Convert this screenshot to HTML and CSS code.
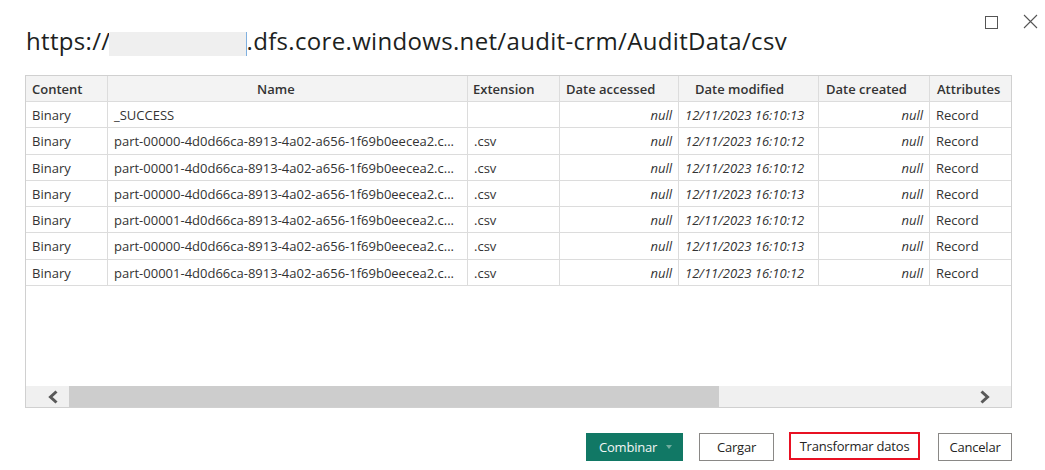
FILE: index.html
```html
<!DOCTYPE html>
<html lang="es">
<head>
<meta charset="utf-8">
<title>Navegador</title>
<link rel="stylesheet" href="styles.css">
</head>
<body>
<div class="dialog">
  <div class="header">
    <h1 class="title">https://<span class="redacted"></span>.dfs.core.windows.net/audit-crm/AuditData/csv</h1>
    <div class="controls">
      <svg class="ctl" width="14" height="14" viewBox="0 0 14 14"><rect x="1.5" y="1.5" width="12" height="12" fill="none" stroke="#555" stroke-width="1"/></svg>
      <svg class="ctl" width="15" height="15" viewBox="0 0 15 15"><path d="M1 1 L14 14 M14 1 L1 14" stroke="#555" stroke-width="1.1" fill="none"/></svg>
    </div>
  </div>

  <div class="table">
    <div class="row head">
      <div class="c c1">Content</div>
      <div class="c c2">Name</div>
      <div class="c c3">Extension</div>
      <div class="c c4">Date accessed</div>
      <div class="c c5">Date modified</div>
      <div class="c c6">Date created</div>
      <div class="c c7">Attributes</div>
    </div>
    <div class="row">
      <div class="c">Binary</div><div class="c">_SUCCESS</div><div class="c"></div>
      <div class="c num">null</div><div class="c it">12/11/2023 16:10:13</div><div class="c num">null</div><div class="c">Record</div>
    </div>
    <div class="row">
      <div class="c">Binary</div><div class="c">part-00000-4d0d66ca-8913-4a02-a656-1f69b0eecea2.c...</div><div class="c">.csv</div>
      <div class="c num">null</div><div class="c it">12/11/2023 16:10:12</div><div class="c num">null</div><div class="c">Record</div>
    </div>
    <div class="row">
      <div class="c">Binary</div><div class="c">part-00001-4d0d66ca-8913-4a02-a656-1f69b0eecea2.c...</div><div class="c">.csv</div>
      <div class="c num">null</div><div class="c it">12/11/2023 16:10:12</div><div class="c num">null</div><div class="c">Record</div>
    </div>
    <div class="row">
      <div class="c">Binary</div><div class="c">part-00000-4d0d66ca-8913-4a02-a656-1f69b0eecea2.c...</div><div class="c">.csv</div>
      <div class="c num">null</div><div class="c it">12/11/2023 16:10:13</div><div class="c num">null</div><div class="c">Record</div>
    </div>
    <div class="row">
      <div class="c">Binary</div><div class="c">part-00001-4d0d66ca-8913-4a02-a656-1f69b0eecea2.c...</div><div class="c">.csv</div>
      <div class="c num">null</div><div class="c it">12/11/2023 16:10:12</div><div class="c num">null</div><div class="c">Record</div>
    </div>
    <div class="row">
      <div class="c">Binary</div><div class="c">part-00000-4d0d66ca-8913-4a02-a656-1f69b0eecea2.c...</div><div class="c">.csv</div>
      <div class="c num">null</div><div class="c it">12/11/2023 16:10:13</div><div class="c num">null</div><div class="c">Record</div>
    </div>
    <div class="row">
      <div class="c">Binary</div><div class="c">part-00001-4d0d66ca-8913-4a02-a656-1f69b0eecea2.c...</div><div class="c">.csv</div>
      <div class="c num">null</div><div class="c it">12/11/2023 16:10:12</div><div class="c num">null</div><div class="c">Record</div>
    </div>
    <div class="spacer"></div>
    <div class="hscroll">
      <div class="sbtn left"><svg width="12" height="14" viewBox="0 0 12 14"><path d="M9.5 1.5 L3.5 7 L9.5 12.5" fill="none" stroke="#595959" stroke-width="3"/></svg></div>
      <div class="thumb"></div>
      <div class="track"></div>
      <div class="sbtn right"><svg width="12" height="14" viewBox="0 0 12 14"><path d="M2.5 1.5 L8.5 7 L2.5 12.5" fill="none" stroke="#595959" stroke-width="3"/></svg></div>
    </div>
  </div>

  <div class="footer">
    <button class="btn primary">Combinar <span class="caret"></span></button>
    <button class="btn b-cargar">Cargar</button>
    <button class="btn b-transform">Transformar datos</button>
    <button class="btn b-cancel">Cancelar</button>
  </div>
</div>
</body>
</html>
```

FILE: styles.css
```css
* { box-sizing: border-box; }
html, body { margin: 0; padding: 0; background: #fff; }
body { font-family: "Open Sans", "Noto Sans", sans-serif; color: #333; width: 1045px; height: 470px; overflow: hidden; }

.header { display: flex; justify-content: space-between; align-items: flex-start; padding: 0 7px 0 26px; }
.title { margin: 25px 0 0; font-size: 24px; line-height: 32px; font-weight: 400; color: #201f1e; white-space: nowrap; letter-spacing: 0.33px; }
.redacted { display: inline-block; width: 138px; height: 24px; background: #efefef; vertical-align: -6px; border-right: 1px solid #7fb0e0; margin-left: -2px; }
.controls { display: flex; gap: 25px; margin-top: 14px; align-items: center; }
.ctl { display: block; }

.table { margin: 18px 33px 0 25px; height: 333px; border: 1px solid #d0d0d0; display: flex; flex-direction: column; }
.row { display: grid; grid-template-columns: 82px 360px 92px 119px 140px 111px 81px; height: 26.3px; border-bottom: 1px solid #dcdcdc; font-size: 13px; }
.row.head { background: #f3f3f3; height: 26px; font-weight: 600; color: #333; }
.c { border-right: 1px solid #dcdcdc; padding: 1px 6px 0; line-height: 25px; white-space: nowrap; overflow: hidden; }
.c:last-child { border-right: none; }
.head .c2 { padding-left: 149px; }
.head .c3 { padding-left: 5px; }
.head .c5 { padding-left: 16px; }
.head .c6 { padding-left: 7px; }
.head .c7 { padding-left: 7px; }
.num { text-align: right; font-style: italic; }
.it { font-style: italic; }
.spacer { flex: 1; }
.hscroll { height: 21px; display: flex; background: #f0f0f0; }
.sbtn { display: flex; align-items: center; }
.sbtn.left { width: 43px; padding-left: 21px; }
.sbtn.right { width: 44px; padding-left: 12px; }
.thumb { width: 650px; background: #cdcdcd; }
.track { flex: 1; }

.footer { display: flex; justify-content: flex-end; align-items: flex-start; padding: 25px 33px 0 0; gap: 16px; }
.btn { font-family: inherit; font-size: 13px; letter-spacing: -0.2px; height: 28px; padding: 0; background: #fff; color: #252423; border: 1px solid #8a8886; cursor: pointer; }
.primary { width: 97px; background: #117865; border-color: #117865; color: #f2f6f5; display: flex; align-items: center; justify-content: flex-start; padding-left: 12px; gap: 9px; }
.caret { display: inline-block; width: 0; height: 0; border-left: 3.5px solid transparent; border-right: 3.5px solid transparent; border-top: 4px solid #72ad9f; }
.b-cargar { width: 75px; }
.b-transform { width: 131px; border: 2px solid #e81123; margin-top: -1px; margin-left: -1px; }
.b-cancel { width: 74px; margin-left: 2px; }
```
